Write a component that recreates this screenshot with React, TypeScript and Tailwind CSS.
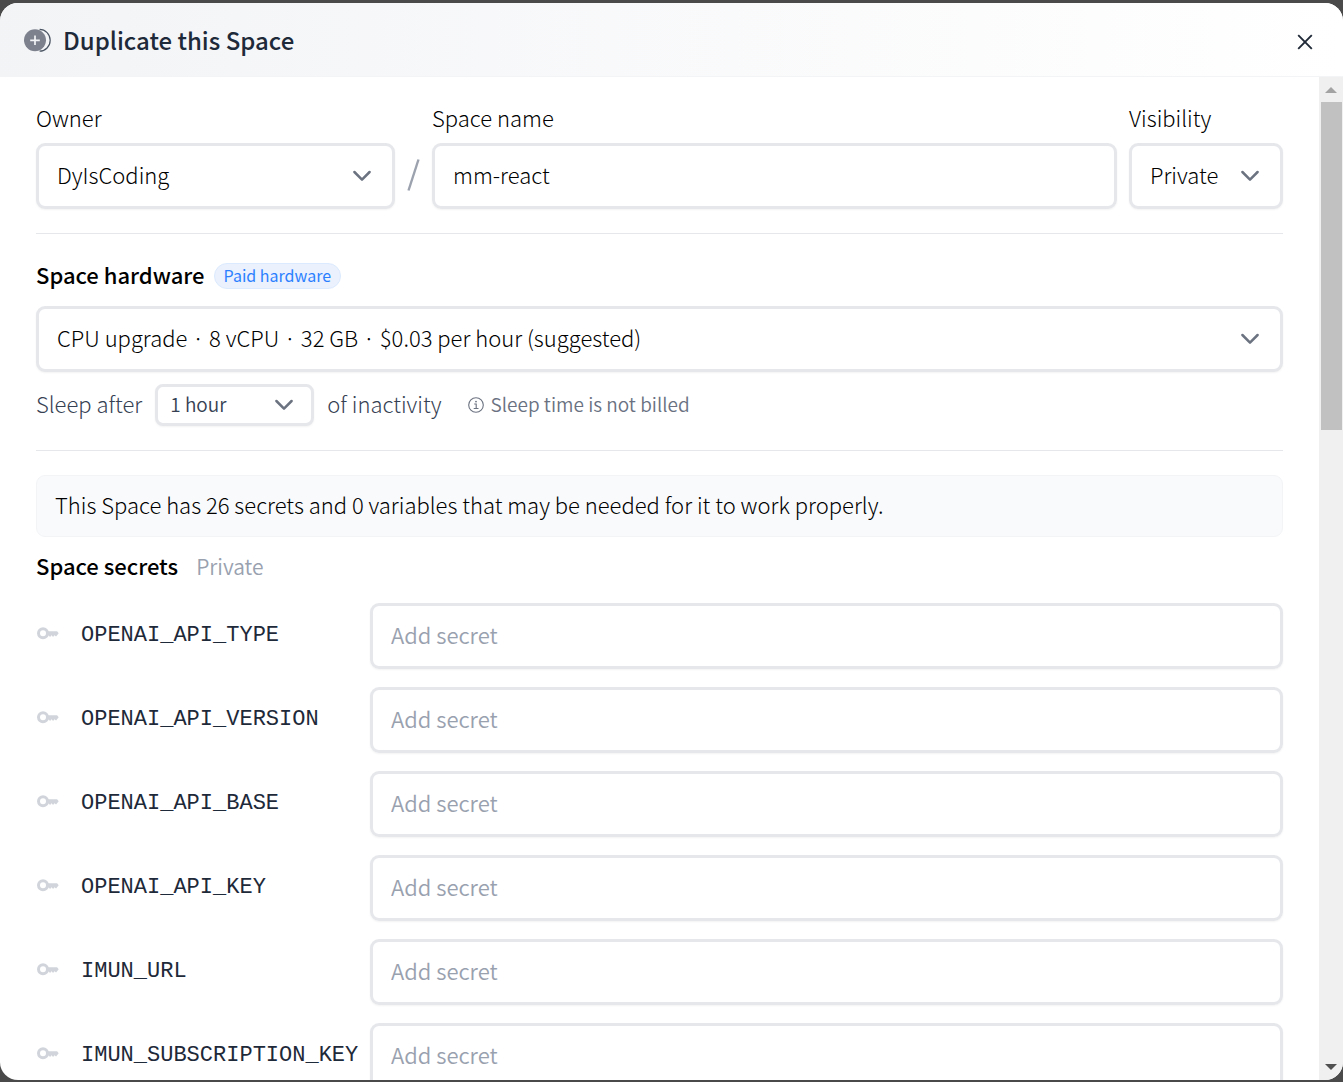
import { SelectHTMLAttributes } from "react";

const secrets = [
  "OPENAI_API_TYPE",
  "OPENAI_API_VERSION",
  "OPENAI_API_BASE",
  "OPENAI_API_KEY",
  "IMUN_URL",
  "IMUN_SUBSCRIPTION_KEY",
];

const DuplicateIcon = () => (
  <svg className="h-6 w-7 shrink-0" viewBox="0 0 28 24" fill="none" aria-hidden="true">
    <path
      d="M15.6 1.4a10.6 10.9 0 0 1 0 21.8"
      stroke="#4b5563"
      strokeWidth="1.2"
    />
    <circle cx="11" cy="12.3" r="11" fill="#7d818d" />
    <path d="M11 7.5v9.6M6.2 12.3h9.6" stroke="#f3f4f6" strokeWidth="1.7" />
  </svg>
);

const CloseIcon = () => (
  <svg className="h-4 w-4" viewBox="0 0 16 16" fill="none" aria-hidden="true">
    <path d="M1.2 1.2l13.6 13.6M14.8 1.2L1.2 14.8" stroke="#1f2937" strokeWidth="1.9" />
  </svg>
);

const KeyIcon = () => (
  <svg className="h-6 w-6 shrink-0" viewBox="0 0 24 24" fill="none" aria-hidden="true">
    <circle cx="7" cy="12.2" r="4.5" stroke="#d1d5db" strokeWidth="3" />
    <path
      d="M11.5 10.2h9.6l1.6 2-2.6 3.4-1.7-1.4-1.3 1.8-1.6-1.8-1.4 1.8-1.5-1.6h-1.1z"
      fill="#d1d5db"
    />
  </svg>
);

const InfoIcon = () => (
  <svg className="mr-[7px] h-4 w-4 shrink-0" viewBox="0 0 16 16" fill="none" aria-hidden="true">
    <circle cx="8" cy="8" r="7.3" stroke="#6b7280" strokeWidth="1.1" />
    <path d="M6.2 7h2v4.4M5.7 11.5h4.8" stroke="#6b7280" strokeWidth="1.1" />
    <circle cx="8" cy="4.6" r="0.9" fill="#6b7280" />
  </svg>
);

type SelectProps = SelectHTMLAttributes<HTMLSelectElement> & {
  label: string;
  small?: boolean;
};

const Select = ({ label, small, ...rest }: SelectProps) => (
  <div className="grid items-center">
    <select
      aria-label={label}
      className={`col-start-1 row-start-1 w-full appearance-none border-[3px] border-gray-200 bg-white shadow-xs outline-none ${
        small
          ? "h-[42px] rounded-lg pb-0.5 pl-3 pr-10 text-[19px] font-[350] text-gray-700"
          : "h-[66px] rounded-[9px] pb-1 pl-[18px] pr-12 text-[22px] text-black"
      }`}
      {...rest}
    />
    <svg
      className={`pointer-events-none col-start-1 row-start-1 h-3 w-5 justify-self-end ${
        small ? "mr-5" : "mr-[23px]"
      }`}
      viewBox="0 0 20 12"
      fill="none"
      aria-hidden="true"
    >
      <path
        d="M2.4 2L10 9.6 17.6 2"
        stroke="#6b7280"
        strokeWidth="2.5"
        strokeLinecap="round"
        strokeLinejoin="round"
      />
    </svg>
  </div>
);

const App = () => {
  return (
    <div className="flex h-screen flex-col bg-[#4a4a4a] pt-[3px] pb-0.5 font-['Noto_Sans_CJK_KR',sans-serif] text-[22px] leading-8 font-light text-black">
      <main className="flex min-h-0 flex-1 flex-col overflow-hidden rounded-[18px] bg-white">
        <header className="flex h-[74px] shrink-0 items-center justify-between border-b border-gray-100 bg-linear-to-r from-gray-100 to-white pr-[30px] pl-6">
          <div className="flex items-center gap-[11px]">
            <DuplicateIcon />
            <h1 className="text-2xl font-medium text-gray-800">
              Duplicate this Space
            </h1>
          </div>
          <button aria-label="Close" className="cursor-pointer pt-1">
            <CloseIcon />
          </button>
        </header>

        <div className="flex min-h-0 flex-1">
          <form className="min-w-0 flex-1 overflow-y-auto px-9 py-6 [scrollbar-width:none]">
            {/* Owner / name / visibility */}
            <div className="flex items-end">
              <div className="flex w-[359px] flex-col gap-2.5">
                <span>Owner</span>
                <Select label="Owner">
                  <option>DyIsCoding</option>
                </Select>
              </div>
              <svg className="mx-3 mb-[18px] h-8 w-[13px]" viewBox="0 0 13 32" fill="none" aria-hidden="true">
                <path d="M11.5 0.5L1.5 31.5" stroke="#9ca3af" strokeWidth="2.4" />
              </svg>
              <div className="flex min-w-0 flex-1 flex-col gap-2.5">
                <label htmlFor="space-name">Space name</label>
                <input
                  id="space-name"
                  defaultValue="mm-react"
                  className="h-[66px] w-full rounded-[9px] border-[3px] border-gray-200 px-[18px] pb-1 shadow-xs outline-none"
                />
              </div>
              <div className="ml-3 flex w-[154px] flex-col gap-2.5">
                <span>Visibility</span>
                <Select label="Visibility">
                  <option>Private</option>
                  <option>Public</option>
                </Select>
              </div>
            </div>

            <hr className="my-6 border-gray-200" />

            {/* Hardware */}
            <div className="mb-4 flex h-8 items-center gap-[9px]">
              <h2 className="font-medium">Space hardware</h2>
              <span className="mt-1 h-[26px] rounded-full border border-blue-100 bg-[#ebf1fd] px-[9px] text-base leading-[22px] font-normal text-blue-500">
                Paid hardware
              </span>
            </div>
            <Select label="Space hardware">
              <option>
                CPU upgrade · 8 vCPU · 32 GB · $0.03 per hour (suggested)
              </option>
            </Select>
            <div className="mt-3 flex items-center text-gray-700">
              <span className="pb-1">Sleep after</span>
              <div className="mx-[13px] w-[159px]">
                <Select label="Sleep after" small>
                  <option>1 hour</option>
                </Select>
              </div>
              <span className="pb-1">of inactivity</span>
              <span className="ml-[26px] flex items-center text-[19px] font-[350] text-gray-500">
                <InfoIcon />
                <span className="pb-0.5">Sleep time is not billed</span>
              </span>
            </div>

            <hr className="my-6 border-gray-200" />

            {/* Secrets */}
            <p className="mb-3 rounded-[9px] border border-gray-100 bg-gray-50 px-[18px] pt-3 pb-4">
              This Space has 26 secrets and 0 variables that may be needed for
              it to work properly.
            </p>
            <div className="mb-[22px] flex h-8 items-baseline gap-[18px]">
              <h2 className="font-medium">Space secrets</h2>
              <span className="text-[21px] font-[350] text-gray-400">
                Private
              </span>
            </div>
            <div className="flex flex-col gap-[18px]">
              {secrets.map((name) => (
                <div key={name} className="flex items-center">
                  <label
                    htmlFor={name}
                    className="flex w-[334px] shrink-0 items-center gap-[21px] pb-1.5 font-['Liberation_Mono',monospace] text-gray-800"
                  >
                    <KeyIcon />
                    <span className="pt-1.5">{name}</span>
                  </label>
                  <input
                    id={name}
                    placeholder="Add secret"
                    className="h-[66px] min-w-0 flex-1 rounded-[9px] border-[3px] border-gray-200 px-[18px] pb-1 font-[350] shadow-xs outline-none placeholder:text-gray-400"
                  />
                </div>
              ))}
            </div>
          </form>

          {/* Scrollbar */}
          <div className="flex w-6 shrink-0 flex-col items-center justify-between bg-[#f0f0f0] pt-2.5 pb-2.5" aria-hidden="true">
            <svg className="h-1.5 w-3" viewBox="0 0 12 6">
              <path d="M0 6L6 0l6 6z" fill="#a3a3a3" />
            </svg>
            <div className="mt-[9px] mb-auto h-[328px] w-[21px] bg-[#c1c1c1]" />
            <svg className="h-1.5 w-3" viewBox="0 0 12 6">
              <path d="M0 0l6 6 6-6z" fill="#505050" />
            </svg>
          </div>
        </div>
      </main>
    </div>
  );
};

export default App;
